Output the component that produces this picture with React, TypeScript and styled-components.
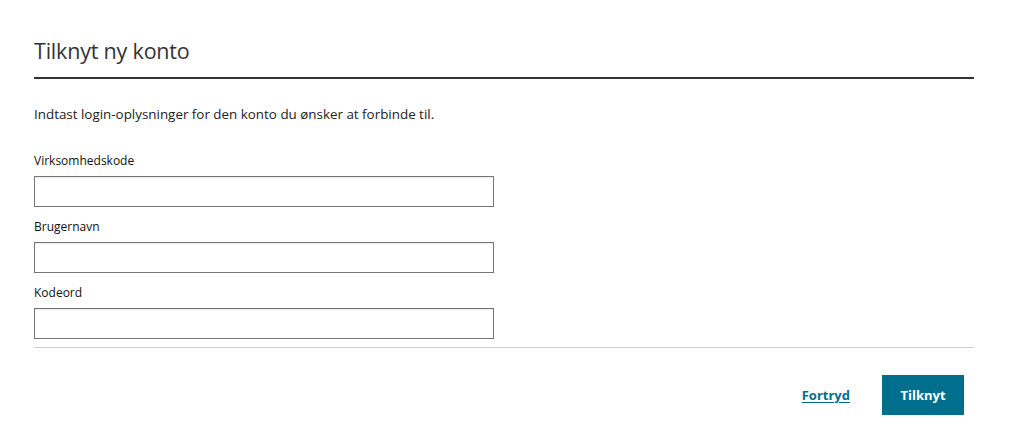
import React from "react";
import styled, { createGlobalStyle } from "styled-components";

const Global = createGlobalStyle`
  html, body { margin: 0; padding: 0; background: #fff; }
  body { font-family: "Open Sans", "Segoe UI", sans-serif; color: #222; }
  * { box-sizing: border-box; }
`;

const Dialog = styled.div`
  width: 1012px;
  height: 438px;
  padding: 34px 38px 0 34px;
  display: flex;
  flex-direction: column;
`;

const Header = styled.div`
  border-bottom: 2px solid #333;
  height: 45px;
  display: flex;
  align-items: flex-start;
`;

const Title = styled.h1`
  margin: 0;
  font-size: 21.5px;
  font-weight: 400;
  line-height: 34px;
  color: #333;
  letter-spacing: -0.2px;
`;

const Intro = styled.p`
  margin: 26px 0 0 0;
  font-size: 13.4px;
  line-height: 18px;
  color: #222;
`;

const Fields = styled.div`
  margin-top: 30px;
  display: flex;
  flex-direction: column;
  gap: 12px;
`;

const Field = styled.label`
  display: flex;
  flex-direction: column;
  gap: 7px;
`;

const Label = styled.span`
  font-size: 12px;
  line-height: 16px;
  color: #111;
`;

const Input = styled.input`
  width: 460px;
  height: 31px;
  border: 1px solid #767676;
  box-shadow: inset 0 1px 1px rgba(0,0,0,0.08);
  outline: none;
  padding: 0 8px;
  font: inherit;
  font-size: 13px;
  background: #fff;
`;

const Footer = styled.div`
  margin-top: 8px;
  border-top: 1px solid #d0d0d0;
  padding-top: 27px;
  display: flex;
  justify-content: flex-end;
  align-items: center;
  gap: 32px;
  padding-right: 10px;
`;

const LinkButton = styled.a`
  font-size: 13px;
  font-weight: 700;
  color: #006e8c;
  text-decoration: underline;
  text-underline-offset: 2px;
  cursor: pointer;
`;

const PrimaryButton = styled.button`
  width: 82px;
  height: 40px;
  border: none;
  background: #006f8e;
  color: #fff;
  font-family: inherit;
  font-size: 13px;
  font-weight: 700;
  cursor: pointer;
`;

const fields = ["Virksomhedskode", "Brugernavn", "Kodeord"];

export default function App() {
  return (
    <>
      <Global />
      <Dialog>
        <Header>
          <Title>Tilknyt ny konto</Title>
        </Header>
        <Intro>Indtast login-oplysninger for den konto du ønsker at forbinde til.</Intro>
        <Fields>
          {fields.map((f) => (
            <Field key={f}>
              <Label>{f}</Label>
              <Input type={f === "Kodeord" ? "password" : "text"} />
            </Field>
          ))}
        </Fields>
        <Footer>
          <LinkButton>Fortryd</LinkButton>
          <PrimaryButton>Tilknyt</PrimaryButton>
        </Footer>
      </Dialog>
    </>
  );
}
